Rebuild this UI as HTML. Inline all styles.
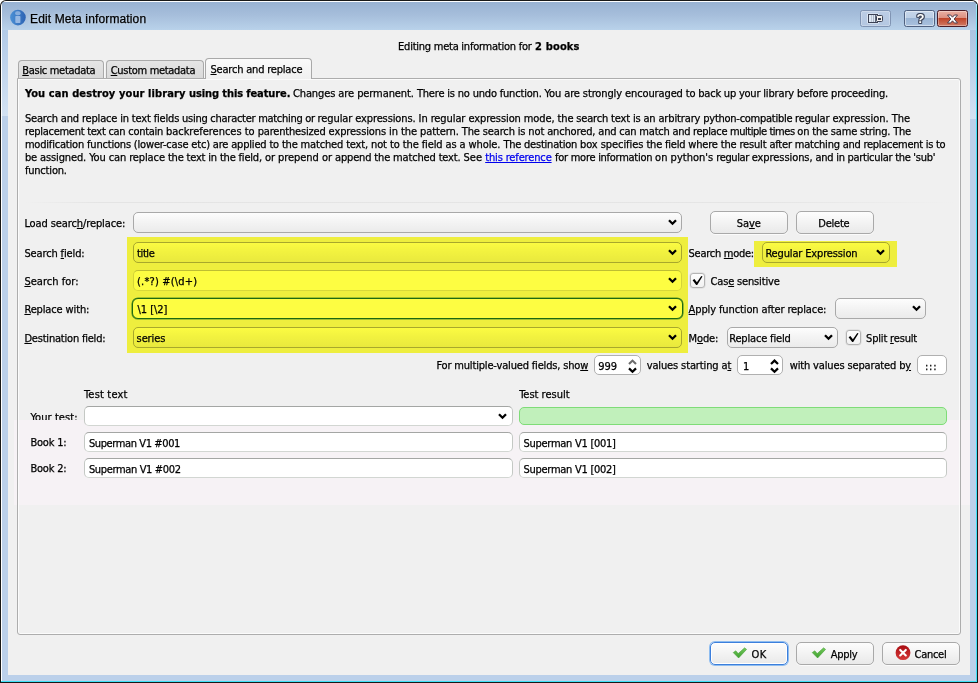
<!DOCTYPE html>
<html lang="en">
<head>
<meta charset="utf-8">
<title>Edit Meta information</title>
<style>
*{box-sizing:border-box;margin:0;padding:0}
html,body{width:978px;height:683px;overflow:hidden;background:#fff}
body{position:relative;font-family:"DejaVu Sans Condensed","DejaVu Sans","Liberation Sans",sans-serif;font-stretch:condensed;font-size:11px;color:#000;line-height:13px}
.a{position:absolute}
.t{position:absolute;white-space:nowrap;line-height:13px;height:13px;-webkit-text-stroke-width:.25px}
u{text-decoration:underline;text-underline-offset:1px}
/* window frame */
#f0{left:0;top:0;width:978px;height:683px;background:#181818;border-radius:6px 6px 0 0}
#f1{left:1px;top:1px;width:976px;height:681px;border-radius:5px 5px 0 0;
 background:linear-gradient(to bottom,#fdfeff 0,#fdfeff 1px,rgba(255,255,255,0) 1px),linear-gradient(to right,#fff 0,#fff 1px,rgba(255,255,255,0) 1px),linear-gradient(to bottom,#97b1d2 0,#a6bedb 14px,#b9d2ea 29px,#bbd0ea 31px,#bbd0ea 100%)}
#f2{left:976px;top:4px;width:1px;height:678px;background:linear-gradient(to bottom,#a5ebfa 0,#6fe5f8 20px,#3fe0f6 60px,#3fe0f6 100%)}
#f3{left:1px;top:681px;width:976px;height:1px;background:#3fe0f6}
#client{left:8px;top:30px;width:962px;height:645px;background:#f0f0f0}
#title{text-shadow:0 0 5px rgba(255,255,255,.55);left:30px;top:11px;font-family:"Liberation Sans",sans-serif;font-stretch:normal;font-size:12px;line-height:16px;height:16px;color:#000}
/* caption buttons */
.cb{position:absolute;top:10px;height:17px;width:31px;border-radius:2.5px}
/* tabs */
.tab{position:absolute;border:1px solid #a9a9a9;border-bottom:none;border-radius:4px 4px 0 0}
#pane{left:17px;top:78px;width:944px;height:557px;border:1px solid #adadad;border-radius:0 3px 3px 3px;background:#f0f0f0;box-shadow:inset 0 0 0 1px #fbfbfb}
/* widgets */
.combo{position:absolute;height:21px;border:1px solid #a9a9a9;border-radius:5px;background:linear-gradient(#fdfdfd,#f4f4f4 45%,#ebebeb)}
.combo svg{position:absolute;right:4px;top:6px}
.btn{position:absolute;height:23px;border:1px solid #a9a9a9;border-radius:5px;background:linear-gradient(#fdfdfd,#f3f3f3 50%,#e9e9e9);box-shadow:0 1px 0 rgba(255,255,255,.7)}
.edit{position:absolute;height:20px;border:1px solid;border-color:#a4a6a4 #c4c8c4 #d2d6d2 #c4c8c4;border-radius:5px;background:#fff}
.chk{position:absolute;width:15px;height:15px;border:1px solid #b4b4b4;border-radius:3px;background:linear-gradient(#fdfdfd,#f2f2f2);box-shadow:0 0 0 .5px rgba(200,200,200,.6)}
.hl{position:absolute;background:#fdfd42;mix-blend-mode:multiply}
</style>
</head>
<body>
<div class="a" id="f0"></div>
<div class="a" id="f1"></div>
<div class="a" id="f2"></div>
<div class="a" id="f3"></div>
<div class="a" style="left:2px;top:30px;width:6px;height:86px;background:linear-gradient(to bottom,#b2cae7,#d3e2f3)"></div>
<div class="a" style="left:970px;top:30px;width:6px;height:89px;background:linear-gradient(to bottom,#abc4e2,#d3e2f3)"></div>
<div class="a" id="client"></div>

<!-- title icon -->
<svg class="a" style="left:9px;top:9px" width="18" height="18" viewBox="0 0 18 18">
 <defs><linearGradient id="ig" x1="0" y1="0" x2="1" y2="0"><stop offset="0" stop-color="#4b90d5"/><stop offset="1" stop-color="#2d63b3"/></linearGradient></defs>
 <circle cx="8.95" cy="8.6" r="7.8" fill="url(#ig)"/>
 <rect x="6.1" y="2.3" width="5.5" height="3.9" rx="1.9" fill="#86addd"/>
 <rect x="6.3" y="7" width="5.1" height="7" rx="0.7" fill="#96b8e3"/>
</svg>
<div class="t" id="title"style=";letter-spacing:0.135px">Edit Meta information</div>

<!-- caption buttons -->
<div class="cb" style="left:860px;border:1px solid #8094b3;background:linear-gradient(#bccde5,#b4c7e1);box-shadow:inset 0 0 0 1px rgba(255,255,255,.25)">
 <svg class="a" style="left:6px;top:2px" width="17" height="11" viewBox="0 0 17 11">
  <rect x="0.3" y="0.4" width="11.6" height="10.2" rx="1" fill="#fff" opacity=".75"/>
  <rect x="1.5" y="1.5" width="9" height="8" fill="#dfe8f3" stroke="#3c4255" stroke-width="1"/>
  <rect x="4" y="2" width="1" height="7" fill="#bcc5d3"/><rect x="6" y="2" width="1" height="7" fill="#aab4c5"/><rect x="8" y="2" width="1" height="7" fill="#5d667a"/>
  <rect x="9.5" y="2.5" width="6" height="6" rx="0.9" fill="#f4f1ee" stroke="#3c4255" stroke-width="1"/>
  <rect x="11" y="5" width="3" height="2" fill="#3a4050"/>
 </svg>
</div>
<div class="cb" style="left:904px;border:1px solid #4f6180;background:linear-gradient(#c6d6ea 0,#bccfe6 47%,#9bb5d5 50%,#a9c1de 100%);box-shadow:inset 0 0 0 1px rgba(255,255,255,.45)">
 <div class="a" style="left:1px;top:0;width:29px;height:15px;text-align:center;font-family:'Liberation Sans',sans-serif;font-stretch:normal;font-weight:bold;font-size:13px;line-height:15px;color:#fff;text-shadow:-1px 0 #3d4657,1px 0 #3d4657,0 -1px #3d4657,0 1px #3d4657,1px 1px 0 #4d5670,-1px -1px 0 #4d5670,1px -1px 0 #4d5670,-1px 1px 0 #4d5670">?</div>
</div>
<div class="cb" style="left:937px;border:1px solid #4b1c26;background:linear-gradient(#eab0a3 0,#dc8f80 47%,#c0452a 50%,#d07a64 100%);box-shadow:inset 0 0 0 1px rgba(255,255,255,.35)">
 <svg class="a" style="left:8px;top:3px" width="13" height="10" viewBox="0 0 13 10">
  <path d="M1.5 1 L4.6 1 L6.5 3.2 L8.4 1 L11.5 1 L8.2 5 L11.5 9 L8.4 9 L6.5 6.8 L4.6 9 L1.5 9 L4.8 5 Z" fill="#fff" stroke="#4c3d4d" stroke-width="1" stroke-linejoin="round"/>
 </svg>
</div>

<!-- heading -->
<div class="t" style="left:398.1px;top:40px;letter-spacing:-0.243px">Editing meta information for</div>
<div class="t" style="left:535.1px;top:40px;letter-spacing:0.153px"><b>2 books</b></div>

<!-- tab pane -->
<div class="a" id="pane"></div>
<div class="tab" style="left:18px;top:60px;width:86px;height:18px;background:linear-gradient(#e5e5e5,#dadada);box-shadow:1px 0 0 #f8f8f8"></div>
<div class="tab" style="left:106px;top:60px;width:98px;height:18px;background:linear-gradient(#e5e5e5,#dadada);box-shadow:1px 0 0 #f8f8f8"></div>
<div class="tab" style="left:205px;top:58px;width:107px;height:21px;background:linear-gradient(#fafafa,#f0f0f0)"></div>
<div class="t" style="left:22.3px;top:64px;letter-spacing:-0.31px"><u>B</u>asic metadata</div>
<div class="t" style="left:110.7px;top:64px;letter-spacing:-0.302px"><u>C</u>ustom metadata</div>
<div class="t" style="left:210.5px;top:63px;letter-spacing:-0.203px"><u>S</u>earch and replace</div>

<!-- intro text -->
<div class="t" style="left:24.9px;top:87px;white-space:pre;letter-spacing:0.1px;font-weight:bold">You can destroy your library </div>
<div class="t" style="left:189.1px;top:87px;white-space:pre;letter-spacing:-0.107px;font-weight:bold">using this feature.</div>
<div class="t" style="left:292.9px;top:87px;white-space:pre;letter-spacing:-0.09px">Changes are permanent. </div>
<div class="t" style="left:416.9px;top:87px;white-space:pre;letter-spacing:-0.186px">There is no undo function. </div>
<div class="t" style="left:544.6px;top:87px;white-space:pre;letter-spacing:-0.116px">You are strongly encouraged </div>
<div class="t" style="left:685.8px;top:87px;white-space:pre;letter-spacing:-0.214px">to back up your </div>
<div class="t" style="left:763.2px;top:87px;white-space:pre;letter-spacing:-0.139px">library before proceeding.</div>
<div class="t" style="left:24.9px;top:112px;white-space:pre;letter-spacing:-0.172px">Search and replace in text fields </div>
<div class="t" style="left:182.1px;top:112px;white-space:pre;letter-spacing:-0.269px">using character </div>
<div class="t" style="left:258.2px;top:112px;white-space:pre;letter-spacing:-0.301px">matching or </div>
<div class="t" style="left:317.6px;top:112px;white-space:pre;letter-spacing:-0.109px">regular expressions. </div>
<div class="t" style="left:418.6px;top:112px;white-space:pre;letter-spacing:-0.095px">In regular expression mode, </div>
<div class="t" style="left:557.6px;top:112px;white-space:pre;letter-spacing:-0.171px">the search text is an </div>
<div class="t" style="left:658.4px;top:112px;white-space:pre;letter-spacing:-0.133px">arbitrary </div>
<div class="t" style="left:703.3px;top:112px;white-space:pre;letter-spacing:-0.265px">python-compatible </div>
<div class="t" style="left:795.1px;top:112px;white-space:pre;letter-spacing:-0.15px">regular </div>
<div class="t" style="left:832.4px;top:112px;white-space:pre;letter-spacing:-0.024px">expression. The</div>
<div class="t" style="left:24.9px;top:125px;white-space:pre;letter-spacing:-0.276px">replacement text can contain </div>
<div class="t" style="left:165.9px;top:125px;white-space:pre;letter-spacing:-0.017px">backreferences to </div>
<div class="t" style="left:257.7px;top:125px;white-space:pre;letter-spacing:-0.179px">parenthesized </div>
<div class="t" style="left:328.6px;top:125px;white-space:pre;letter-spacing:-0.094px">expressions in the pattern. </div>
<div class="t" style="left:461.8px;top:125px;white-space:pre;letter-spacing:-0.144px">The search is not anchored, </div>
<div class="t" style="left:598.3px;top:125px;white-space:pre;letter-spacing:-0.202px">and can match </div>
<div class="t" style="left:672.6px;top:125px;white-space:pre;letter-spacing:-0.338px">and replace </div>
<div class="t" style="left:730.0px;top:125px;white-space:pre;letter-spacing:-0.461px">multiple times </div>
<div class="t" style="left:797.3px;top:125px;white-space:pre;letter-spacing:-0.188px">on the same string. The</div>
<div class="t" style="left:24.9px;top:138px;white-space:pre;letter-spacing:-0.187px">modification functions (lower-case etc) </div>
<div class="t" style="left:212.8px;top:138px;white-space:pre;letter-spacing:-0.181px">are applied to the </div>
<div class="t" style="left:300.6px;top:138px;white-space:pre;letter-spacing:-0.158px">matched text, </div>
<div class="t" style="left:371.0px;top:138px;white-space:pre;letter-spacing:-0.104px">not to the field as a whole. </div>
<div class="t" style="left:503.4px;top:138px;white-space:pre;letter-spacing:-0.222px">The destination </div>
<div class="t" style="left:580.0px;top:138px;white-space:pre;letter-spacing:-0.067px">box specifies </div>
<div class="t" style="left:646.4px;top:138px;white-space:pre;letter-spacing:-0.194px">the field where </div>
<div class="t" style="left:720.7px;top:138px;white-space:pre;letter-spacing:-0.164px">the result </div>
<div class="t" style="left:769.4px;top:138px;white-space:pre;letter-spacing:-0.192px">after matching </div>
<div class="t" style="left:842.8px;top:138px;white-space:pre;letter-spacing:-0.276px">and replacement is to</div>
<div class="t" style="left:24.9px;top:151px;white-space:pre;letter-spacing:-0.122px">be assigned. You can replace </div>
<div class="t" style="left:167.9px;top:151px;white-space:pre;letter-spacing:-0.184px">the text in the field, </div>
<div class="t" style="left:264.9px;top:151px;white-space:pre;letter-spacing:-0.05px">or prepend or </div>
<div class="t" style="left:335.0px;top:151px;white-space:pre;letter-spacing:-0.157px">append the matched text. </div>
<div class="t" style="left:463.5px;top:151px;white-space:pre;letter-spacing:0.023px">See </div>
<div class="t" style="left:485.2px;top:151px;white-space:pre;letter-spacing:-0.143px;color:#0000ee;text-decoration:underline">this reference</div>
<div class="t" style="left:551.6px;top:151px;white-space:pre;letter-spacing:0px"> </div>
<div class="t" style="left:555.1px;top:151px;white-space:pre;letter-spacing:-0.273px">for more information </div>
<div class="t" style="left:655.1px;top:151px;white-space:pre;letter-spacing:0.008px">on python's </div>
<div class="t" style="left:716.3px;top:151px;white-space:pre;letter-spacing:-0.388px">regular </div>
<div class="t" style="left:751.7px;top:151px;white-space:pre;letter-spacing:-0.068px">expressions, </div>
<div class="t" style="left:815.6px;top:151px;white-space:pre;letter-spacing:-0.287px">and in particular the 'sub'</div>
<div class="t" style="left:24.9px;top:164px;white-space:pre;letter-spacing:-0.185px">function.</div>
<div class="a" style="left:24px;top:202px;width:932px;height:1px;background:linear-gradient(to right,rgba(228,228,228,0),#e4e4e4 8%,#e5e5e5 80%,rgba(230,230,230,0))"></div>

<!-- overlay patch (lighter band) -->
<div class="a" style="left:14px;top:420px;width:956px;height:85px;background:#f6f2f5"></div>
<div class="a" style="left:17px;top:420px;width:1px;height:85px;background:#adadad"></div><div class="a" style="left:18px;top:420px;width:1px;height:85px;background:#fbfbfb"></div>
<div class="a" style="left:960px;top:420px;width:1px;height:85px;background:#adadad"></div><div class="a" style="left:959px;top:420px;width:1px;height:85px;background:#fbfbfb"></div>

<!-- form rows -->
<div class="t" style="left:24.4px;top:217px;letter-spacing:-0.102px">Load searc<u>h</u>/replace:</div>
<div class="combo" style="left:133px;top:212px;width:549px"><svg width="9" height="7" viewBox="0 0 9 7"><path d="M1 1.2 L4.5 4.7 L8 1.2" fill="none" stroke="#000" stroke-width="2.3"/></svg></div>
<div class="btn" style="left:710px;top:211px;width:78px"></div>
<div class="t" style="left:736.7px;top:217px;letter-spacing:-0.038px">Sa<u>v</u>e</div>
<div class="btn" style="left:796px;top:211px;width:78px"></div>
<div class="t" style="left:818.3px;top:217px;letter-spacing:-0.226px">Delete</div>

<div class="t" style="left:24.4px;top:247px;letter-spacing:-0.129px">Search <u>f</u>ield:</div>
<div class="combo" style="left:133px;top:242px;width:549px"><svg width="9" height="7" viewBox="0 0 9 7"><path d="M1 1.2 L4.5 4.7 L8 1.2" fill="none" stroke="#000" stroke-width="2.3"/></svg></div>
<div class="t" style="left:137.1px;top:247px;letter-spacing:-0.415px">title</div>
<div class="t" style="left:688.6px;top:247px;letter-spacing:-0.277px">Search <u>m</u>ode:</div>
<div class="combo" style="left:762px;top:242px;width:128px"><svg width="9" height="7" viewBox="0 0 9 7"><path d="M1 1.2 L4.5 4.7 L8 1.2" fill="none" stroke="#000" stroke-width="2.3"/></svg></div>
<div class="t" style="left:765.4px;top:247px;letter-spacing:-0.15px">Regular Expression</div>

<div class="t" style="left:24.4px;top:275px;letter-spacing:0.023px"><u>S</u>earch for:</div>
<div class="combo" style="left:133px;top:270px;width:549px;background:#fff;border-color:#c0c0c0 #d6d6d6 #dadada #d6d6d6"><svg width="9" height="7" viewBox="0 0 9 7"><path d="M1 1.2 L4.5 4.7 L8 1.2" fill="none" stroke="#000" stroke-width="2.3"/></svg></div>
<div class="t" style="left:137.1px;top:275px;letter-spacing:0.16px">(.*?) #(\d+)</div>
<div class="chk" style="left:690px;top:273px"><svg class="a" style="left:-1px;top:-1px" width="15" height="15" viewBox="0 0 15 15"><path d="M2.6 7.2 L4.4 5.9 L6.9 9.2 L11.3 2.9 L12.5 3.6 L7.2 12 L6.2 12 Z" fill="#000"/></svg></div>
<div class="t" style="left:710.5px;top:275px;letter-spacing:-0.161px">Cas<u>e</u> sensitive</div>

<div class="t" style="left:24.4px;top:303px;letter-spacing:-0.133px"><u>R</u>eplace with:</div>
<div class="combo" style="left:132px;top:298px;width:551px;height:21px;border:1px solid #1d6b3f;border-radius:6px;background:#fff;box-shadow:0 0 0 .6px rgba(40,120,75,.75)"><svg style="right:5px;top:6px" width="9" height="7" viewBox="0 0 9 7"><path d="M1 1.2 L4.5 4.7 L8 1.2" fill="none" stroke="#000" stroke-width="2.3"/></svg></div>
<div class="t" style="left:137.6px;top:303px;letter-spacing:-0.073px">\1 [\2]</div>
<div class="t" style="left:688.6px;top:303px;letter-spacing:-0.114px"><u>A</u>pply function after replace:</div>
<div class="combo" style="left:835px;top:298px;width:91px"><svg width="9" height="7" viewBox="0 0 9 7"><path d="M1 1.2 L4.5 4.7 L8 1.2" fill="none" stroke="#000" stroke-width="2.3"/></svg></div>

<div class="t" style="left:24.4px;top:332px;letter-spacing:-0.202px"><u>D</u>estination field:</div>
<div class="combo" style="left:133px;top:327px;width:549px"><svg width="9" height="7" viewBox="0 0 9 7"><path d="M1 1.2 L4.5 4.7 L8 1.2" fill="none" stroke="#000" stroke-width="2.3"/></svg></div>
<div class="t" style="left:136.6px;top:332px;letter-spacing:-0.123px">series</div>
<div class="t" style="left:688.6px;top:332px;letter-spacing:-0.132px">M<u>o</u>de:</div>
<div class="combo" style="left:727px;top:327px;width:111px"><svg width="9" height="7" viewBox="0 0 9 7"><path d="M1 1.2 L4.5 4.7 L8 1.2" fill="none" stroke="#000" stroke-width="2.3"/></svg></div>
<div class="t" style="left:729.2px;top:332px;letter-spacing:-0.167px">Replace field</div>
<div class="chk" style="left:846px;top:330px"><svg class="a" style="left:-1px;top:-1px" width="15" height="15" viewBox="0 0 15 15"><path d="M2.6 7.2 L4.4 5.9 L6.9 9.2 L11.3 2.9 L12.5 3.6 L7.2 12 L6.2 12 Z" fill="#000"/></svg></div>
<div class="t" style="left:866.1px;top:332px;letter-spacing:-0.18px">Split <u>r</u>esult</div>

<!-- highlights -->
<div class="hl" style="left:127px;top:237px;width:561px;height:116px"></div>
<div class="hl" style="left:754px;top:241px;width:143px;height:26px"></div>

<!-- multi-valued row -->
<div class="t" style="left:436.4px;top:359px;letter-spacing:-0.168px">For multiple-valued fields, sho<u>w</u></div>
<div class="edit" style="left:594px;top:355px;width:47px;border-color:#b0b0b0">
 <svg class="a" style="left:33px;top:2px" width="9" height="16" viewBox="0 0 9 16"><path d="M1 6 L4.5 2.6 L8 6" fill="none" stroke="#6c6c6c" stroke-width="2.1"/><path d="M1 10.4 L4.5 13.8 L8 10.4" fill="none" stroke="#000" stroke-width="2.2"/></svg>
</div>
<div class="t" style="left:598.3px;top:360px;letter-spacing:-0.095px">999</div>
<div class="t" style="left:646.7px;top:359px;letter-spacing:-0.128px">values starting a<u>t</u></div>
<div class="edit" style="left:737px;top:355px;width:46px;border-color:#b0b0b0">
 <svg class="a" style="left:32px;top:2px" width="9" height="16" viewBox="0 0 9 16"><path d="M1 6 L4.5 2.6 L8 6" fill="none" stroke="#000" stroke-width="2.2"/><path d="M1 10.4 L4.5 13.8 L8 10.4" fill="none" stroke="#000" stroke-width="2.2"/></svg>
</div>
<div class="t" style="left:743px;top:360px">1</div>
<div class="t" style="left:789.7px;top:359px;letter-spacing:-0.141px">with values separated b<u>y</u></div>
<div class="edit" style="left:917px;top:355px;width:30px;border-color:#b0b0b0"></div>
<div class="t" style="left:924.9px;top:360px;letter-spacing:0.792px">:::</div>

<!-- test area -->
<div class="t" style="left:84.0px;top:388px;letter-spacing:0.181px">Test text</div>
<div class="t" style="left:519.15px;top:388px;letter-spacing:0.003px">Test result</div>
<div class="a" style="left:0;top:408px;width:84px;height:12px;overflow:hidden"><div class="t" style="left:30.4px;top:3px;letter-spacing:0.081px">Your test:</div></div>
<div class="edit" style="left:84px;top:406px;width:429px"><svg class="a" style="right:5px;top:6px" width="9" height="7" viewBox="0 0 9 7"><path d="M1 1.2 L4.5 4.7 L8 1.2" fill="none" stroke="#000" stroke-width="2.3"/></svg></div>
<div class="edit" style="left:519px;top:407px;width:428px;height:18px;background:#c1f0bb;border-color:#7fdc78"></div>

<div class="t" style="left:30.4px;top:436px;letter-spacing:-0.201px">Book 1:</div>
<div class="edit" style="left:84px;top:432px;width:429px"></div>
<div class="t" style="left:88.9px;top:437px;letter-spacing:-0.391px">Superman V1 #001</div>
<div class="edit" style="left:519px;top:432px;width:428px"></div>
<div class="t" style="left:523.4px;top:437px;letter-spacing:-0.259px">Superman V1 [001]</div>

<div class="t" style="left:30.4px;top:462px;letter-spacing:-0.201px">Book 2:</div>
<div class="edit" style="left:84px;top:458px;width:429px"></div>
<div class="t" style="left:88.9px;top:463px;letter-spacing:-0.347px">Superman V1 #002</div>
<div class="edit" style="left:519px;top:458px;width:428px"></div>
<div class="t" style="left:523.4px;top:463px;letter-spacing:-0.259px">Superman V1 [002]</div>

<!-- bottom buttons -->
<div class="btn" style="left:710px;top:642px;width:78px;border:1px solid #3c7fdc;box-shadow:0 0 0 1px #8fbdf0,inset 0 0 0 1px #fff"></div>
<svg class="a" style="left:732px;top:647px" width="16" height="12" viewBox="0 0 16 12"><defs><linearGradient id="cg" x1="0" y1="0" x2="0" y2="1"><stop offset="0" stop-color="#74c95c"/><stop offset="1" stop-color="#3f9f2f"/></linearGradient></defs><path d="M1.2 5.6 L3.8 3.8 L6.2 6.6 L12.6 0.8 L14.6 2.4 L6.6 11 Z" fill="url(#cg)" stroke="#3f9e30" stroke-width=".5"/></svg>
<div class="t" style="left:751.5px;top:648px;letter-spacing:0.5px">OK</div>
<div class="btn" style="left:796px;top:642px;width:78px"></div>
<svg class="a" style="left:811px;top:647px" width="16" height="12" viewBox="0 0 16 12"><path d="M1.2 5.6 L3.8 3.8 L6.2 6.6 L12.6 0.8 L14.6 2.4 L6.6 11 Z" fill="url(#cg)" stroke="#3f9e30" stroke-width=".5"/></svg>
<div class="t" style="left:830.7px;top:648px;letter-spacing:-0.263px">Apply</div>
<div class="btn" style="left:882px;top:642px;width:78px"></div>
<svg class="a" style="left:895px;top:645px" width="16" height="16" viewBox="0 0 16 16">
 <defs><linearGradient id="rg" x1="0" y1="0" x2="0" y2="1"><stop offset="0" stop-color="#a90d12"/><stop offset="1" stop-color="#d63a3a"/></linearGradient></defs>
 <circle cx="8" cy="7.7" r="7.4" fill="url(#rg)"/>
 <path d="M5.2 4.9 L10.8 10.5 M10.8 4.9 L5.2 10.5" stroke="#fff" stroke-width="2.1" stroke-linecap="round"/>
</svg>
<div class="t" style="left:914.5px;top:648px;letter-spacing:-0.269px">Cancel</div>
</body>
</html>
